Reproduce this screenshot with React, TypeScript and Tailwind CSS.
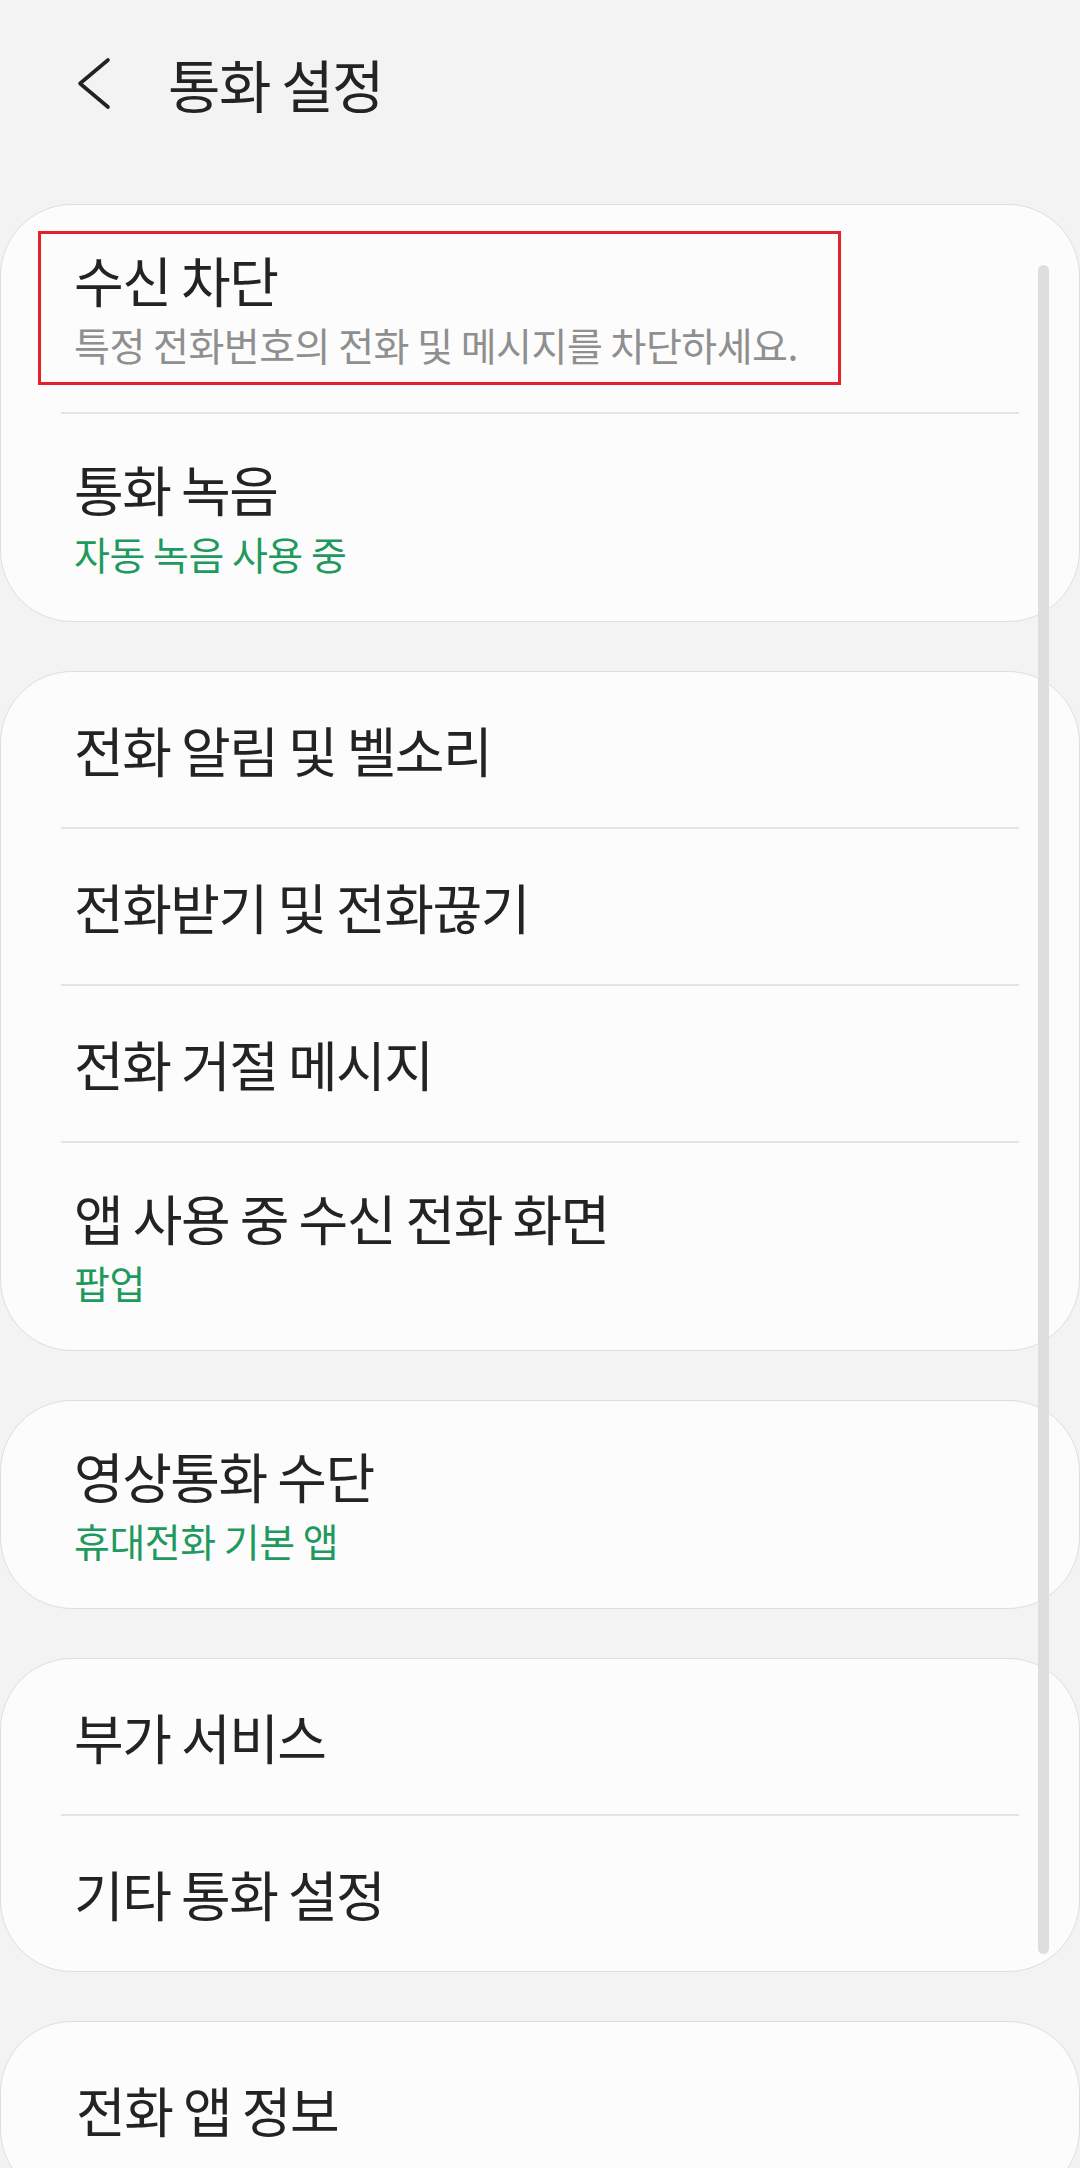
import React from "react";

type Item = {
  title: string;
  sub?: string;
  subTone?: "gray" | "green";
};

const groups: Item[][] = [
  [
    { title: "수신 차단", sub: "특정 전화번호의 전화 및 메시지를 차단하세요.", subTone: "gray" },
    { title: "통화 녹음", sub: "자동 녹음 사용 중", subTone: "green" },
  ],
  [
    { title: "전화 알림 및 벨소리" },
    { title: "전화받기 및 전화끊기" },
    { title: "전화 거절 메시지" },
    { title: "앱 사용 중 수신 전화 화면", sub: "팝업", subTone: "green" },
  ],
  [{ title: "영상통화 수단", sub: "휴대전화 기본 앱", subTone: "green" }],
  [{ title: "부가 서비스" }, { title: "기타 통화 설정" }],
];

function Row({ item }: { item: Item }) {
  if (!item.sub) {
    return (
      <div className="flex h-[155px] items-center px-[73px]">
        <span className="text-[54px] leading-[62px] tracking-[-1.5px] text-[#232323]">
          {item.title}
        </span>
      </div>
    );
  }

  return (
    <div className="flex h-[207px] flex-col justify-center px-[73px]">
      <span className="text-[54px] leading-[62px] tracking-[-1.5px] text-[#232323]">
        {item.title}
      </span>
      <span
        className={
          item.subTone === "green"
            ? "mt-[9px] text-[39px] leading-[48px] tracking-[-0.5px] text-[#1f9a5e]"
            : "mt-[9px] text-[39px] leading-[48px] tracking-[-0.5px] text-[#8f8f8f]"
        }
      >
        {item.sub}
      </span>
    </div>
  );
}

function Card({ items }: { items: Item[] }) {
  return (
    <div className="overflow-hidden rounded-[72px] border border-[#dedede] bg-[#fcfcfc]">
      {items.map((item, i) => (
        <div key={item.title}>
          {i > 0 && <div className="mx-[60px] h-[2px] bg-[#e4e4e4]" />}
          <Row item={item} />
        </div>
      ))}
    </div>
  );
}

export default function App() {
  return (
    <div className="relative h-[2168px] w-[1080px] overflow-hidden bg-[#f3f3f3] font-['Noto_Sans_CJK_KR','Noto_Sans',sans-serif]">
      <header className="flex h-[166px] items-center">
        <svg
          className="ml-[76px]"
          width="36"
          height="56"
          viewBox="0 0 36 56"
          fill="none"
          stroke="#222"
          strokeWidth="3.6"
          strokeLinecap="round"
          strokeLinejoin="round"
        >
          <polyline points="32,5 4,28.5 32,52" />
        </svg>
        <h1 className="ml-[56px] text-[57px] font-normal leading-[64px] tracking-[-1.5px] text-[#232323]">
          통화 설정
        </h1>
      </header>

      <div className="mt-[38px] flex flex-col gap-[49px]">
        {groups.map((g, i) => (
          <Card key={i} items={g} />
        ))}

        <div className="overflow-hidden rounded-[72px] border border-[#dedede] bg-[#fcfcfc]">
          <div className="flex h-[178px] items-center px-[75px] pb-[2px]">
            <span className="text-[54px] leading-[62px] tracking-[-1.5px] text-[#232323]">
              전화 앱 정보
            </span>
          </div>
        </div>
      </div>

      {/* highlight box over the first row */}
      <div className="pointer-events-none absolute left-[38px] top-[231px] h-[154px] w-[803px] border-[3px] border-[#e5222b]" />

      {/* scrollbar */}
      <div className="absolute left-[1038px] top-[265px] h-[1689px] w-[11px] rounded-full bg-[#dedede]" />
    </div>
  );
}
